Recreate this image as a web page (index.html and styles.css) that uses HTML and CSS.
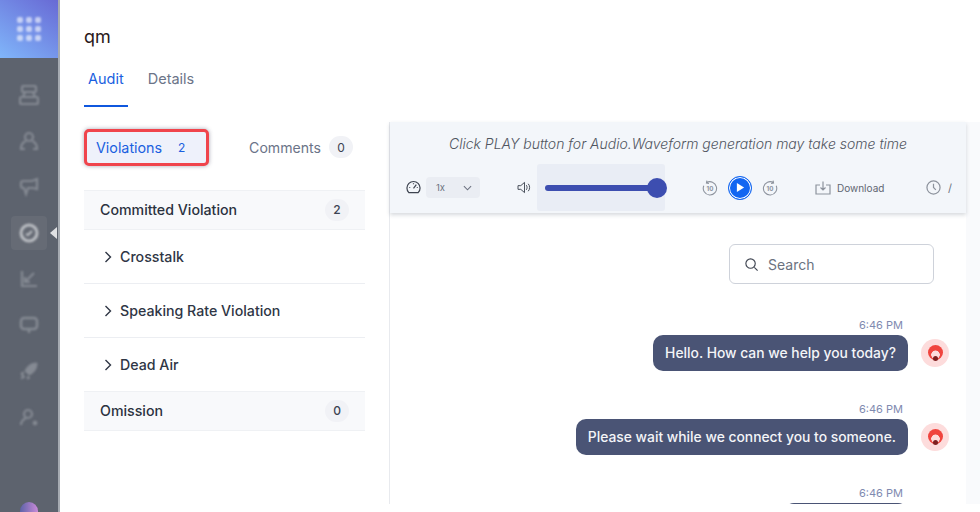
FILE: index.html
```html
<!DOCTYPE html>
<html lang="en">
<head>
    <meta charset="UTF-8">
    <title>qm</title>
    <link rel="stylesheet" href="styles.css">
</head>
<body>
    <aside class="sidebar">
        <div class="brand">
            <svg class="grid-icon" viewBox="0 0 24 24" fill="#fff">
                <rect x="0" y="0" width="6" height="6" rx="2"/><rect x="9" y="0" width="6" height="6" rx="2"/><rect x="18" y="0" width="6" height="6" rx="2"/>
                <rect x="0" y="9" width="6" height="6" rx="2"/><rect x="9" y="9" width="6" height="6" rx="2"/><rect x="18" y="9" width="6" height="6" rx="2"/>
                <rect x="0" y="18" width="6" height="6" rx="2"/><rect x="9" y="18" width="6" height="6" rx="2"/><rect x="18" y="18" width="6" height="6" rx="2"/>
            </svg>
        </div>
        <nav class="side-nav">
            <div class="side-item">
                <svg viewBox="0 0 20 20"><rect x="3" y="1" width="14" height="6" rx="1.500"/><rect x="1" y="12" width="18" height="7" rx="1.500"/><path d="M6 7l-2 5M14 7l2 5"/></svg>
            </div>
            <div class="side-item">
                <svg viewBox="0 0 20 20"><circle cx="10" cy="6" r="4"/><path d="M7 10c-3 1-5 4-5 8h4M13 10c3 1 5 4 5 8h-4"/></svg>
            </div>
            <div class="side-item">
                <svg viewBox="0 0 20 20"><path d="M2 6c0-1 1-2 2-2h9l5-2v10l-4-1H9l-2 6-2-6H4c-1 0-2-1-2-2z"/></svg>
            </div>
            <div class="side-item active">
                <svg viewBox="0 0 20 20"><circle cx="10" cy="10" r="8" stroke-width="3"/><path d="M7 11l2 1 4-4"/></svg>
            </div>
            <div class="side-item">
                <svg viewBox="0 0 20 20"><path d="M3 2v15h15M6 13l9-9M6 8v5h5"/></svg>
            </div>
            <div class="side-item">
                <svg viewBox="0 0 20 20"><rect x="2" y="3" width="16" height="11" rx="3" stroke-width="2.500"/><path d="M10 14v4" stroke-width="2.500"/></svg>
            </div>
            <div class="side-item">
                <svg viewBox="0 0 20 20"><path class="solid" d="M18 2c-6 0-10 3-12 8l4 4c5-2 8-6 8-12zM5 11l-3 1 1 3zM9 15l-1 3 3-1zM4 14l-2 4 4-2z"/></svg>
            </div>
            <div class="side-item">
                <svg viewBox="0 0 20 20"><circle cx="9" cy="7" r="4"/><path d="M2 18c0-4 3-6 5-7"/><circle class="solid" cx="16" cy="16" r="2"/></svg>
            </div>
        </nav>
        <div class="side-logo"></div>
    </aside>
    <div class="side-edge"><span class="side-arrow"></span></div>

    <main class="main">
        <header class="page-head">
            <h1>qm</h1>
            <div class="tabs">
                <a class="tab selected">Audit</a>
                <a class="tab">Details</a>
            </div>
        </header>

        <div class="content">
            <section class="left-pane">
                <div class="pane-tabs">
                    <div class="pane-tab highlighted">Violations <span class="count-plain">2</span></div>
                    <div class="pane-tab">Comments <span class="count">0</span></div>
                </div>

                <div class="group-row">Committed Violation <span class="count">2</span></div>
                <div class="item-row">
                    <svg class="chev" viewBox="0 0 8 12"><path d="M1.500 1l5 5-5 5"/></svg>Crosstalk
                </div>
                <div class="item-row">
                    <svg class="chev" viewBox="0 0 8 12"><path d="M1.500 1l5 5-5 5"/></svg>Speaking Rate Violation
                </div>
                <div class="item-row last">
                    <svg class="chev" viewBox="0 0 8 12"><path d="M1.500 1l5 5-5 5"/></svg>Dead Air
                </div>
                <div class="group-row">Omission <span class="count">0</span></div>
            </section>

            <section class="right-pane">
                <div class="player">
                    <p class="player-note">Click PLAY button for Audio.Waveform generation may take some time</p>
                    <div class="controls">
                        <svg class="gauge" viewBox="0 0 16 16"><path d="M3 13.500a7 7 0 1 1 10 0z"/><path d="M8 9l3-4M3.500 8h1M11.500 8h1M8 3.500v1"/></svg>
                        <div class="speed">1x
                            <svg viewBox="0 0 10 6"><path d="M1 1l4 4 4-4"/></svg>
                        </div>
                        <svg class="volume" viewBox="0 0 16 14"><path d="M1 5h3l4-3.500v11L4 9H1zM10 4.500c1 1.500 1 3.500 0 5M12 3c2 2 2 6 0 8"/></svg>
                        <div class="volume-box">
                            <div class="volume-track"><span class="volume-knob"></span></div>
                        </div>
                        <svg class="skip back" viewBox="0 0 18 18"><path d="M5 3a7.500 7.500 0 1 1-3 3.500M5.500 .8L5 3.500l2.800 .5"/><text x="9" y="12" text-anchor="middle">10</text></svg>
                        <div class="play">
                            <svg viewBox="0 0 10 12"><path d="M1 1l8 5-8 5z"/></svg>
                        </div>
                        <svg class="skip" viewBox="0 0 18 18"><path d="M13 3a7.500 7.500 0 1 0 3 3.500M12.500 .8l.5 2.700-2.800 .5"/><text x="9" y="12" text-anchor="middle">10</text></svg>
                        <div class="download">
                            <svg viewBox="0 0 16 14"><path d="M5 4H1v9h14V4h-4M8 .5v8M5.500 6.500L8 9l2.500-2.500"/></svg>
                            Download
                        </div>
                        <div class="duration">
                            <svg viewBox="0 0 16 16"><circle cx="8" cy="8" r="7"/><path d="M8 4v4l2.500 2.500"/></svg>
                            /
                        </div>
                    </div>
                </div>

                <div class="chat">
                    <div class="search-row">
                        <label class="search">
                            <svg viewBox="0 0 16 16"><circle cx="7" cy="7" r="5"/><path d="M11 11l3.500 3.500"/></svg>
                            <span>Search</span>
                        </label>
                    </div>

                    <div class="msg">
                        <time>6:46 PM</time>
                        <div class="msg-line">
                            <div class="bubble">Hello. How can we help you today?</div>
                            <div class="avatar"><span class="avatar-dot"></span></div>
                        </div>
                    </div>
                    <div class="msg">
                        <time>6:46 PM</time>
                        <div class="msg-line">
                            <div class="bubble">Please wait while we connect you to someone.</div>
                            <div class="avatar"><span class="avatar-dot"></span></div>
                        </div>
                    </div>
                    <div class="msg">
                        <time>6:46 PM</time>
                        <div class="msg-line">
                            <div class="bubble short">&nbsp;</div>
                            <div class="avatar"><span class="avatar-dot"></span></div>
                        </div>
                    </div>
                </div>
            </section>
        </div>
    </main>
</body>
</html>
```

FILE: styles.css
```css
* {
    box-sizing: border-box;
}
html,
body {
    height: 100%;
}
body {
    font-family: 'Inter', 'Liberation Sans', sans-serif;
    margin: 0;
    display: flex;
    height: 512px;
    overflow: hidden;
    background: #fff;
    color: #252b37;
}

/* dimmed sidebar */
.sidebar {
    width: 58px;
    flex: none;
    display: flex;
    flex-direction: column;
    background: #5d636e;
}
.brand {
    height: 58px;
    display: flex;
    align-items: center;
    justify-content: center;
    background: linear-gradient(35deg, #80b6fa, #6f80e0 70%, #686ad4);
}
.grid-icon {
    width: 24px;
    height: 24px;
    opacity: 0.6;
    filter: blur(0.8px);
}
.side-nav {
    display: flex;
    flex-direction: column;
    align-items: center;
    flex: 1;
    padding-top: 14px;
}
.side-item {
    width: 36px;
    height: 46px;
    display: flex;
    align-items: center;
    justify-content: center;
}
.side-item svg {
    width: 20px;
    height: 20px;
    fill: none;
    stroke: #858a93;
    stroke-width: 2.200;
    filter: blur(1px);
}
.side-item .solid {
    fill: #858a93;
    stroke-width: 1;
}
.side-item.active {
    background: #666b75;
    border-radius: 4px;
    height: 34px;
    margin: 6px 0;
}
.side-item.active svg {
    stroke: #b9bcc1;
}
.side-logo {
    width: 18px;
    height: 10px;
    margin: 0 0 0 20px;
    border-radius: 9px 9px 0 0;
    background: linear-gradient(90deg, #5d63a8, #c98ad8);
    filter: blur(0.6px);
}
.side-edge {
    width: 2px;
    flex: none;
    background: #a6abb2;
    position: relative;
}
.side-arrow {
    position: absolute;
    left: -8px;
    top: 227px;
    border: 6px solid transparent;
    border-right: 7px solid #e0e1e4;
    border-left: 0;
}

.main {
    flex: 1;
    min-width: 0;
    display: flex;
    flex-direction: column;
}
.page-head {
    padding: 27px 0 0 24px;
    height: 122px;
}
h1 {
    margin: 0;
    font-size: 18px;
    line-height: 20px;
    font-weight: 400;
    color: #2a1a1a;
}
.tabs {
    display: flex;
    margin-top: 12px;
}
.tab {
    padding: 10px 4px 0;
    height: 48px;
    margin-right: 16px;
    font-size: 14.500px;
    line-height: 20px;
    color: #6b7488;
}
.tab.selected {
    color: #1a5fe0;
    border-bottom: 2px solid #0f57de;
}

.content {
    flex: 1;
    display: flex;
    min-height: 0;
}
.left-pane {
    width: 329px;
    flex: none;
    padding-left: 24px;
}
.pane-tabs {
    display: flex;
    justify-content: space-between;
    align-items: center;
    width: 281px;
    height: 68px;
    padding: 1px 12px 19px 0;
}
.pane-tab {
    font-size: 14.100px;
    color: #6b7488;
    display: flex;
    align-items: center;
}
.pane-tab.highlighted {
    width: 125px;
    height: 37px;
    padding-left: 9px;
    font-size: 14.300px;
    color: #1a5fe0;
    background: #eef1fb;
    border: 3px solid #f0444c;
    border-radius: 5px;
    box-shadow: 0 0 4px rgba(60, 60, 90, 0.45);
}
.count-plain {
    margin-left: 16px;
    font-size: 12px;
}
.count {
    width: 24px;
    height: 22px;
    margin-left: 8px;
    display: flex;
    align-items: center;
    justify-content: center;
    border-radius: 11px;
    background: #f1f2f6;
    color: #3c4352;
    font-size: 12px;
}
.group-row {
    height: 40px;
    width: 281px;
    padding: 0 16px 1px;
    display: flex;
    align-items: center;
    justify-content: space-between;
    background: #f8f9fb;
    border-top: 1px solid #eff1f4;
    border-bottom: 1px solid #eff1f4;
    font-size: 14.200px;
    font-weight: 500;
    color: #2b3240;
}
.item-row {
    height: 54px;
    width: 281px;
    padding-left: 20px;
    display: flex;
    align-items: center;
    border-bottom: 1px solid #eceef2;
    font-size: 14.200px;
    font-weight: 500;
    color: #2f3645;
}
.item-row.last {
    height: 53px;
    border-bottom: 0;
}
.chev {
    width: 8px;
    height: 12px;
    margin-right: 8px;
    fill: none;
    stroke: #2f3645;
    stroke-width: 1.400;
}

.right-pane {
    width: 591px;
    flex: none;
    height: 382px;
    padding-right: 14px;
    border-left: 1px solid #e8eaee;
    background: #f9fafc;
    display: flex;
    flex-direction: column;
}
.player {
    height: 91px;
    background: #f3f6fa;
    box-shadow: 0 2px 4px rgba(70, 80, 100, 0.22);
    position: relative;
    z-index: 1;
}
.player-note {
    margin: 0;
    padding-top: 13px;
    text-align: center;
    font-size: 14px;
    line-height: 17px;
    font-style: italic;
    font-weight: 300;
    color: #50555f;
}
.controls {
    display: flex;
    align-items: center;
    height: 47px;
    margin-top: 12px;
    padding-left: 16px;
    font-size: 9.500px;
    color: #6c7280;
}
.gauge {
    width: 15px;
    height: 15px;
    fill: none;
    stroke: #3e4450;
    stroke-width: 1.300;
}
.speed {
    width: 54px;
    height: 21px;
    margin-left: 5px;
    padding: 0 8px 0 10px;
    display: flex;
    align-items: center;
    justify-content: space-between;
    border-radius: 4px;
    background: #eaedf3;
}
.speed svg {
    width: 9px;
    height: 6px;
    fill: none;
    stroke: #6c7280;
    stroke-width: 1.200;
}
.volume {
    width: 15px;
    height: 13px;
    margin-left: 37px;
    fill: none;
    stroke: #3e4450;
    stroke-width: 1;
}
.volume-box {
    width: 128px;
    height: 47px;
    margin-left: 5px;
    padding: 0 8px;
    display: flex;
    align-items: center;
    background: #e9edf5;
    border-radius: 3px;
}
.volume-track {
    width: 120px;
    height: 6px;
    flex: none;
    border-radius: 3px;
    background: #3d4eb0;
    position: relative;
}
.volume-knob {
    position: absolute;
    right: -2px;
    top: -7px;
    width: 20px;
    height: 20px;
    border-radius: 50%;
    background: #3d4eb0;
}
.skip {
    width: 16px;
    height: 16px;
    flex: none;
    fill: none;
    stroke: #8d939d;
    stroke-width: 1.200;
}
.skip text {
    font-size: 7px;
    font-weight: 700;
    fill: #8d939d;
    stroke: none;
}
.skip.back {
    margin-left: 37px;
}
.play {
    width: 24px;
    height: 24px;
    flex: none;
    margin: 0 10px;
    display: flex;
    align-items: center;
    justify-content: center;
    border-radius: 50%;
    background: #1266f1;
    border: 1px solid #1266f1;
    box-shadow: inset 0 0 0 1px #fff;
}
.play svg {
    width: 9px;
    height: 11px;
    fill: #fff;
}
.download {
    display: flex;
    align-items: center;
    flex: none;
    margin-left: 37px;
    width: 70px;
    font-size: 10px;
    color: #5f6672;
}
.download svg {
    width: 16px;
    height: 14px;
    margin-right: 6px;
    fill: none;
    stroke: #8d939d;
    stroke-width: 1.200;
}
.duration {
    display: flex;
    align-items: center;
    margin-left: 41px;
    font-size: 11px;
}
.duration svg {
    width: 15px;
    height: 15px;
    margin-right: 7px;
    fill: none;
    stroke: #8d939d;
    stroke-width: 1.300;
}

.chat {
    flex: 1;
    min-height: 0;
    overflow: hidden;
    padding: 31px 17px 0 0;
    background: #fff;
}
.search-row {
    display: flex;
    justify-content: flex-end;
    padding-right: 15px;
    margin-bottom: 35px;
}
.search {
    width: 205px;
    height: 40px;
    padding-left: 14px;
    display: flex;
    align-items: center;
    border: 1px solid #ced2da;
    border-radius: 6px;
    font-size: 14px;
    color: #6b7280;
}
.search svg {
    width: 15px;
    height: 15px;
    margin-right: 9px;
    fill: none;
    stroke: #3e4450;
    stroke-width: 1.200;
}
.msg {
    display: flex;
    flex-direction: column;
    align-items: flex-end;
    height: 84px;
}
.msg time {
    margin-right: 46px;
    font-size: 11px;
    line-height: 13px;
    color: #7f8ab0;
}
.msg-line {
    display: flex;
    align-items: center;
    margin-top: 3px;
}
.bubble {
    padding: 0 12px 1px;
    height: 36px;
    display: flex;
    align-items: center;
    border-radius: 10px;
    background: #4a5475;
    color: #f4f5f8;
    font-size: 13.850px;
    font-weight: 500;
}
.bubble.short {
    width: 124px;
}
.avatar {
    width: 28px;
    height: 28px;
    margin-left: 13px;
    border-radius: 50%;
    background: #fddcdc;
    display: flex;
    align-items: flex-end;
    justify-content: center;
    padding-bottom: 6px;
    position: relative;
}
.avatar::before {
    content: "";
    position: absolute;
    left: 7px;
    top: 6px;
    width: 15px;
    height: 15px;
    border-radius: 50%;
    background: radial-gradient(circle at 50% 65%, #fddcdc 0 4px, #f0443e 4.500px);
}
.avatar-dot {
    width: 5px;
    height: 5px;
    border-radius: 50%;
    background: #7f1f1f;
    position: relative;
}
```
